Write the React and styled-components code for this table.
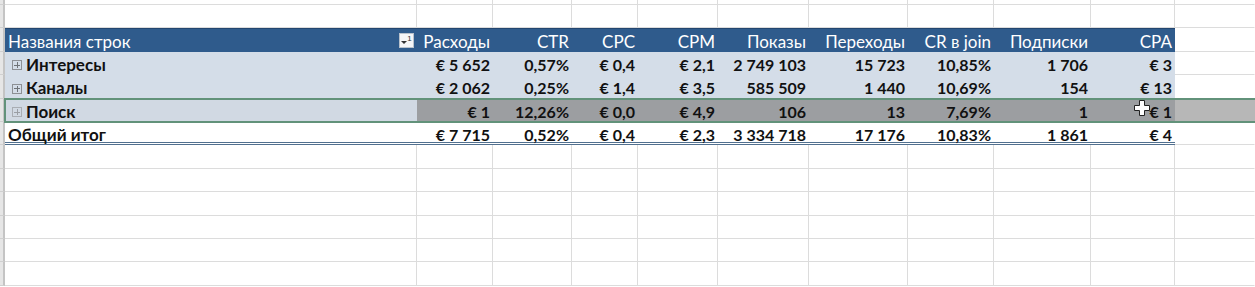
import React from "react";
import styled, { createGlobalStyle } from "styled-components";

const GlobalStyle = createGlobalStyle`
  html, body {
    margin: 0;
    padding: 0;
    background: #ffffff;
  }
  body {
    font-family: "Lato", "Open Sans", "Liberation Sans", sans-serif;
    overflow: hidden;
  }
`;

const COLS = "5px 412px 76px 79px 66px 80px 91px 99px 86px 97px 84px 1fr";
const ROW_H = 23.4;

const Sheet = styled.div`
  width: 1255px;
  height: 287px;
  overflow: hidden;
  background: #ffffff;
`;

const Row = styled.div`
  position: relative;
  display: grid;
  grid-template-columns: ${COLS};
  grid-template-rows: ${(props) => props.h || ROW_H}px;
  height: ${(props) => props.h || ROW_H}px;
  box-sizing: border-box;
`;

const RowHead = styled.div`
  background: #e6e6e6;
  border-right: 2px solid #c4c4c4;
  border-bottom: 1px solid #d0d0d0;
  box-sizing: border-box;
`;

const Cell = styled.div`
  box-sizing: border-box;
  border-right: 1px solid ${(props) => (props.noRight ? "transparent" : "#dcdcdc")};
  border-bottom: 1px solid #dcdcdc;
  background: #ffffff;
`;

const PivotRow = styled.div`
  position: relative;
  display: grid;
  grid-template-columns: ${COLS};
  grid-template-rows: ${ROW_H}px;
  height: ${ROW_H}px;
  box-sizing: border-box;
  font-size: 16px;
  line-height: ${ROW_H + 3}px;
  color: #111111;
  font-weight: 700;
`;

const HeadCell = styled.div`
  background: #2f5b8c;
  color: #ffffff;
  font-weight: 400;
  font-size: 17px;
  border-top: 1px solid #23466f;
  padding: 2px 3px 0;
  white-space: nowrap;
  display: flex;
  align-items: center;
  justify-content: ${(props) => (props.left ? "space-between" : "flex-end")};
  box-sizing: border-box;
  line-height: 1;
`;

const DataCell = styled.div`
  background: ${(props) => props.bg || "#d4dde8"};
  padding: 0 3px;
  text-align: right;
  white-space: nowrap;
  box-sizing: border-box;
`;

const LabelCell = styled.div`
  background: ${(props) => props.bg || "#d4dde8"};
  padding: 3px 3px 0;
  display: flex;
  align-items: center;
  gap: 4px;
  font-size: 17px;
  white-space: nowrap;
  box-sizing: border-box;
`;

const TotalCell = styled.div`
  background: #ffffff;
  border-bottom: 3px double #51708f;
  padding: 3px 3px 0;
  height: ${ROW_H}px;
  font-size: ${(props) => (props.left ? "17px" : "16px")};
  text-align: ${(props) => (props.left ? "left" : "right")};
  white-space: nowrap;
  box-sizing: border-box;
  line-height: ${ROW_H - 3}px;
  overflow: visible;
`;

const Expander = styled.span`
  display: inline-flex;
  width: 10px;
  height: 10px;
  margin-left: 4px;
  margin-top: 1px;
  border: 1px solid ${(props) => (props.faded ? "#a9adb3" : "#8d9095")};
  box-sizing: border-box;
  align-items: center;
  justify-content: center;
  position: relative;
  &::before,
  &::after {
    content: "";
    position: absolute;
    background: ${(props) => (props.faded ? "#9a9ea4" : "#6f7378")};
  }
  &::before {
    width: 6px;
    height: 1px;
  }
  &::after {
    width: 1px;
    height: 6px;
  }
`;

const FilterBtn = styled.span`
  display: inline-flex;
  align-items: flex-start;
  justify-content: center;
  width: 15px;
  height: 15px;
  margin-top: -2px;
  background: #f4f5f7;
  border: 1px solid #b9c2cc;
  box-sizing: border-box;
  color: #333;
  font-size: 8px;
  line-height: 8px;
  font-family: "Liberation Sans", sans-serif;
  padding-top: 1px;
`;

const Arrow = styled.span`
  width: 0;
  height: 0;
  margin-top: 6px;
  border-left: 3px solid transparent;
  border-right: 3px solid transparent;
  border-top: 3px solid #333;
`;

const SelectLine = styled.div`
  position: absolute;
  left: 5px;
  right: 0;
  height: 2px;
  background: #62927a;
  top: ${(props) => (props.bottom ? "auto" : "-1px")};
  bottom: ${(props) => (props.bottom ? "-1px" : "auto")};
  z-index: 2;
`;

const SelectEdge = styled.div`
  position: absolute;
  left: 4px;
  top: -1px;
  bottom: -1px;
  width: 2px;
  background: #62927a;
  z-index: 2;
`;

const Cursor = styled.svg`
  position: absolute;
  left: 1133px;
  top: 0px;
  z-index: 3;
`;

const headers = ["Расходы", "CTR", "CPC", "CPM", "Показы", "Переходы", "CR в join", "Подписки", "CPA"];

const rows = [
  { name: "Интересы", vals: ["€ 5 652", "0,57%", "€ 0,4", "€ 2,1", "2 749 103", "15 723", "10,85%", "1 706", "€ 3"] },
  { name: "Каналы", vals: ["€ 2 062", "0,25%", "€ 1,4", "€ 3,5", "585 509", "1 440", "10,69%", "154", "€ 13"] },
];

const selected = { name: "Поиск", vals: ["€ 1", "12,26%", "€ 0,0", "€ 4,9", "106", "13", "7,69%", "1", "€ 1"] };

const total = ["€ 7 715", "0,52%", "€ 0,4", "€ 2,3", "3 334 718", "17 176", "10,83%", "1 861", "€ 4"];

function EmptyRow({ h }) {
  return (
    <Row h={h}>
      <RowHead />
      <Cell />
      {Array.from({ length: 10 }).map((_, i) => (
        <Cell key={i} noRight={i === 9} />
      ))}
    </Row>
  );
}

function App() {
  return (
    <>
      <GlobalStyle />
      <Sheet>
        <EmptyRow h={5} />
        <EmptyRow h={ROW_H} />

        <PivotRow>
          <RowHead />
          <HeadCell left>
            <span>Названия строк</span>
            <FilterBtn>
              <Arrow />
              <span>1</span>
            </FilterBtn>
          </HeadCell>
          {headers.map((h) => (
            <HeadCell key={h}>{h}</HeadCell>
          ))}
          <Cell noRight />
        </PivotRow>

        {rows.map((r) => (
          <PivotRow key={r.name}>
            <RowHead />
            <LabelCell>
              <Expander />
              {r.name}
            </LabelCell>
            {r.vals.map((v, i) => (
              <DataCell key={i}>{v}</DataCell>
            ))}
            <Cell noRight />
          </PivotRow>
        ))}

        <PivotRow>
          <SelectLine />
          <SelectLine bottom />
          <SelectEdge />
          <RowHead />
          <LabelCell bg="#d1d9e3">
            <Expander faded />
            {selected.name}
          </LabelCell>
          {selected.vals.map((v, i) => (
            <DataCell key={i} bg="#9c9ea1">
              {v}
            </DataCell>
          ))}
          <DataCell bg="#b7b7b7" />
          <Cursor width="18" height="18" viewBox="0 0 18 18">
            <path
              d="M6.5 1.5h5v5h5v5h-5v5h-5v-5h-5v-5h5z"
              fill="#ffffff"
              stroke="#222222"
              strokeWidth="1"
            />
          </Cursor>
        </PivotRow>

        <PivotRow>
          <RowHead />
          <TotalCell left>Общий итог</TotalCell>
          {total.map((v, i) => (
            <TotalCell key={i}>{v}</TotalCell>
          ))}
          <Cell noRight />
        </PivotRow>

        {Array.from({ length: 6 }).map((_, i) => (
          <EmptyRow key={i} h={ROW_H} />
        ))}
      </Sheet>
    </>
  );
}

export default App;
